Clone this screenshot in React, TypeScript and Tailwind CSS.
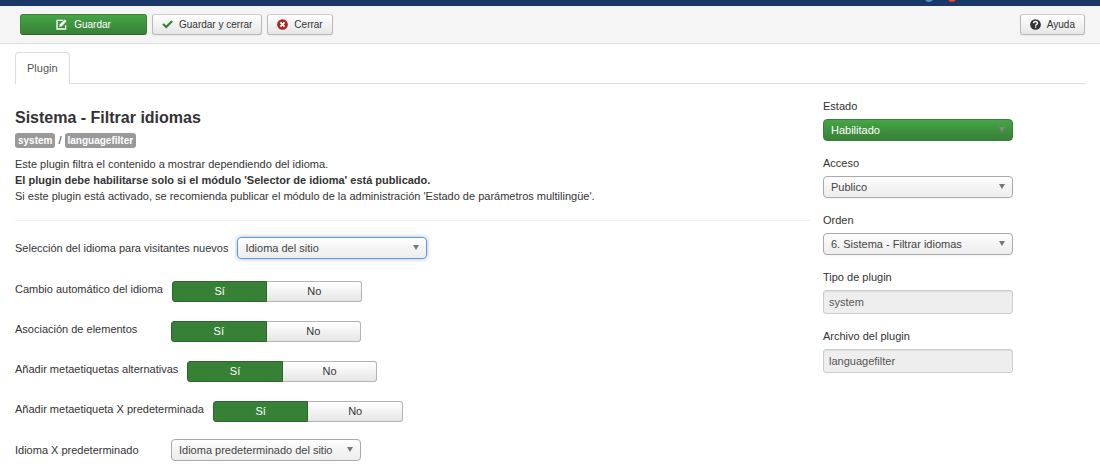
import { useState, type ReactNode } from "react";
import clsx from "clsx";

const plainButton =
  "flex h-[21px] items-center justify-center gap-[6px] rounded-[3px] border border-[#b9b9b9] border-t-[#cccccc] bg-linear-to-b from-white to-[#e6e6e6] px-[9px] text-[#333333] shadow-xs";

const EditIcon = () => (
  <svg viewBox="0 0 16 16" className="h-[11px] w-[11px]" fill="none" stroke="currentColor" aria-hidden="true">
    <path d="M10 2H1.500v12.500H14V9" strokeWidth="2" />
    <path d="M4.800 11.600l.8-4L12.700.6l2.700 2.700-7 7.200z" fill="currentColor" stroke="none" />
  </svg>
);

const CheckIcon = () => (
  <svg viewBox="0 0 16 16" className="h-[11px] w-[11px] text-[#378137]" aria-hidden="true">
    <path d="M1.500 7.200l4.700 4.500L14.800 3" fill="none" stroke="currentColor" strokeWidth="3.200" />
  </svg>
);

const CancelIcon = () => (
  <svg viewBox="0 0 16 16" className="h-[11px] w-[11px]" aria-hidden="true">
    <circle cx="8" cy="8" r="7.800" fill="#a32a26" />
    <path d="M5 5l6 6M11 5l-6 6" stroke="#ffffff" strokeWidth="2.600" />
  </svg>
);

const HelpIcon = () => (
  <svg viewBox="0 0 16 16" className="h-[11px] w-[11px]" aria-hidden="true">
    <circle cx="8" cy="8" r="7.800" fill="#333333" />
    <path d="M5.200 6.200c0-3.500 5.700-3.400 5.700-.2 0 2-2.700 1.800-2.700 3.800" fill="none" stroke="#ffffff" strokeWidth="2" />
    <path d="M7.200 10.800h2v2h-2z" fill="#ffffff" />
  </svg>
);

type SelectProps = {
  id: string;
  options: string[];
  variant?: "default" | "focused" | "success";
};

const Select = ({ id, options, variant = "default" }: SelectProps) => (
  <div className="relative w-[190px]">
    <select
      id={id}
      className={clsx(
        "block h-[22px] w-full appearance-none rounded-[4px] border pr-5 pl-[7px] outline-none",
        variant === "default" &&
          "border-[#aaaaaa] bg-linear-to-b from-white via-[#f4f4f4] to-[#eeeeee] text-[#444444] shadow-xs",
        variant === "focused" &&
          "border-[#5897fb] bg-linear-to-b from-white via-[#f4f4f4] to-[#eeeeee] text-[#444444] shadow-[0_0_4px_rgba(0,0,0,0.3)]",
        variant === "success" &&
          "border-[#378137] bg-linear-to-b from-[#46a546] to-[#378137] text-white",
      )}
    >
      {options.map((option) => (
        <option key={option}>{option}</option>
      ))}
    </select>
    <svg
      viewBox="0 0 6 5"
      className={clsx(
        "pointer-events-none absolute top-2 right-2 h-[5px] w-[6px]",
        variant === "success" ? "text-[#8f8091]" : "text-[#777777]",
      )}
      aria-hidden="true"
    >
      <path d="M0 0h6L3 5z" fill="currentColor" />
    </svg>
  </div>
);

const Switch = ({ name, legend }: { name: string; legend: string }) => {
  const [enabled, setEnabled] = useState(true);

  return (
    <div role="radiogroup" aria-label={legend} className="flex h-[21px] w-[190px]">
      <label
        className={clsx(
          "flex flex-1 cursor-pointer items-center justify-center rounded-l-[3px] border",
          enabled
            ? "border-[#2c682c] bg-[#378137] text-white"
            : "border-[#b3b3b3] bg-linear-to-b from-white to-[#e6e6e6] text-[#333333]",
        )}
      >
        <input type="radio" name={name} className="sr-only" checked={enabled} onChange={() => setEnabled(true)} />
        Sí
      </label>
      <label
        className={clsx(
          "flex flex-1 cursor-pointer items-center justify-center rounded-r-[3px] border border-l-0",
          enabled
            ? "border-[#b3b3b3] bg-linear-to-b from-white to-[#e6e6e6] text-[#333333]"
            : "border-[#802420] bg-[#bd362f] text-white",
        )}
      >
        <input type="radio" name={name} className="sr-only" checked={!enabled} onChange={() => setEnabled(false)} />
        No
      </label>
    </div>
  );
};

const SwitchRow = ({ name, label }: { name: string; label: string }) => (
  <div className="flex items-start gap-[9px]">
    <span className="min-w-[147px] leading-4">{label}</span>
    <Switch name={name} legend={label} />
  </div>
);

const SideField = ({ id, label, children }: { id: string; label: string; children: ReactNode }) => (
  <div>
    <label htmlFor={id} className="mb-[5px] block leading-4">
      {label}
    </label>
    {children}
  </div>
);

const readonlyInput =
  "block h-6 w-[190px] rounded-[3px] border border-[#cccccc] bg-[#eeeeee] px-[5px] text-[#555555] shadow-[inset_0_1px_1px_rgba(0,0,0,0.075)] outline-none";

const switches = [
  { name: "automatic_change", label: "Cambio automático del idioma" },
  { name: "item_associations", label: "Asociación de elementos" },
  { name: "alternate_meta", label: "Añadir metaetiquetas alternativas" },
  { name: "xdefault", label: "Añadir metaetiqueta X predeterminada" },
];

const App = () => (
  <div className="bg-white font-['Liberation_Sans',Arial,sans-serif] text-[11px] text-[#333333]">
    <header className="flex h-[6px] items-start justify-end overflow-hidden bg-[#1a3867] pr-[141px]">
      <svg viewBox="0 0 40 6" className="h-[6px] w-10" aria-hidden="true">
        <circle cx="10" cy="-2" r="4" fill="#4a90d0" />
        <circle cx="33" cy="-2" r="4" fill="#f44321" />
      </svg>
    </header>

    <div className="flex items-start gap-[5px] border-b border-[#dddddd] bg-[#f5f5f5] pt-2 pr-[15px] pb-2 pl-5 text-[10px]">
      <button
        type="button"
        className="flex h-[21px] w-[127px] items-center justify-center gap-[7px] rounded-[3px] border border-[#378137] border-b-[#2c682c] bg-linear-to-b from-[#46a546] to-[#378137] text-white"
      >
        <EditIcon />
        Guardar
      </button>
      <button type="button" className={plainButton}>
        <CheckIcon />
        Guardar y cerrar
      </button>
      <button type="button" className={plainButton}>
        <CancelIcon />
        Cerrar
      </button>
      <button type="button" className={clsx(plainButton, "ml-auto")}>
        <HelpIcon />
        Ayuda
      </button>
    </div>

    <main className="px-[15px] pt-2">
      <div role="tablist" className="flex border-b border-[#dddddd]">
        <button
          type="button"
          role="tab"
          aria-selected="true"
          className="-mb-px h-8 rounded-t-[4px] border border-b-0 border-[#dddddd] bg-white px-[11px] text-[#555555]"
        >
          Plugin
        </button>
      </div>

      <div className="grid grid-cols-[795fr_262fr] gap-[13px] pt-[14px]">
        <section className="pt-[10px]">
          <h1 className="text-base leading-5 font-bold">Sistema - Filtrar idiomas</h1>
          <div className="mt-[5px] flex items-center gap-[3px] leading-[15px]">
            <span className="rounded-[3px] bg-[#999999] px-[3px] text-[10px] font-bold text-white">system</span>
            /
            <span className="rounded-[3px] bg-[#999999] px-[3px] text-[10px] font-bold text-white">
              languagefilter
            </span>
          </div>
          <div className="mt-2 leading-4">
            <p>Este plugin filtra el contenido a mostrar dependiendo del idioma.</p>
            <p className="font-bold">
              El plugin debe habilitarse solo si el módulo 'Selector de idioma' está publicado.
            </p>
            <p>
              Si este plugin está activado, se recomienda publicar el módulo de la administración 'Estado de
              parámetros multilingüe'.
            </p>
          </div>
          <hr className="mt-4 border-[#eeeeee]" />

          <form className="pt-4">
            <div className="flex items-center gap-[9px]">
              <label htmlFor="new_visitors" className="min-w-[147px]">
                Selección del idioma para visitantes nuevos
              </label>
              <Select id="new_visitors" options={["Idioma del sitio", "Ajustes del navegador"]} variant="focused" />
            </div>
            <div className="mt-[22px] flex flex-col gap-[19px]">
              {switches.map((item) => (
                <SwitchRow key={item.name} name={item.name} label={item.label} />
              ))}
            </div>
            <div className="mt-[17px] flex items-center gap-[9px]">
              <label htmlFor="xdefault_language" className="min-w-[147px]">
                Idioma X predeterminado
              </label>
              <Select id="xdefault_language" options={["Idioma predeterminado del sitio"]} />
            </div>
          </form>
        </section>

        <aside className="flex flex-col gap-[14px]">
          <SideField id="status" label="Estado">
            <Select id="status" options={["Habilitado", "Deshabilitado"]} variant="success" />
          </SideField>
          <SideField id="access" label="Acceso">
            <Select id="access" options={["Publico"]} />
          </SideField>
          <SideField id="ordering" label="Orden">
            <Select id="ordering" options={["6. Sistema - Filtrar idiomas"]} />
          </SideField>
          <SideField id="folder" label="Tipo de plugin">
            <input id="folder" type="text" readOnly value="system" className={readonlyInput} />
          </SideField>
          <SideField id="element" label="Archivo del plugin">
            <input id="element" type="text" readOnly value="languagefilter" className={readonlyInput} />
          </SideField>
        </aside>
      </div>
    </main>
  </div>
);

export default App;
